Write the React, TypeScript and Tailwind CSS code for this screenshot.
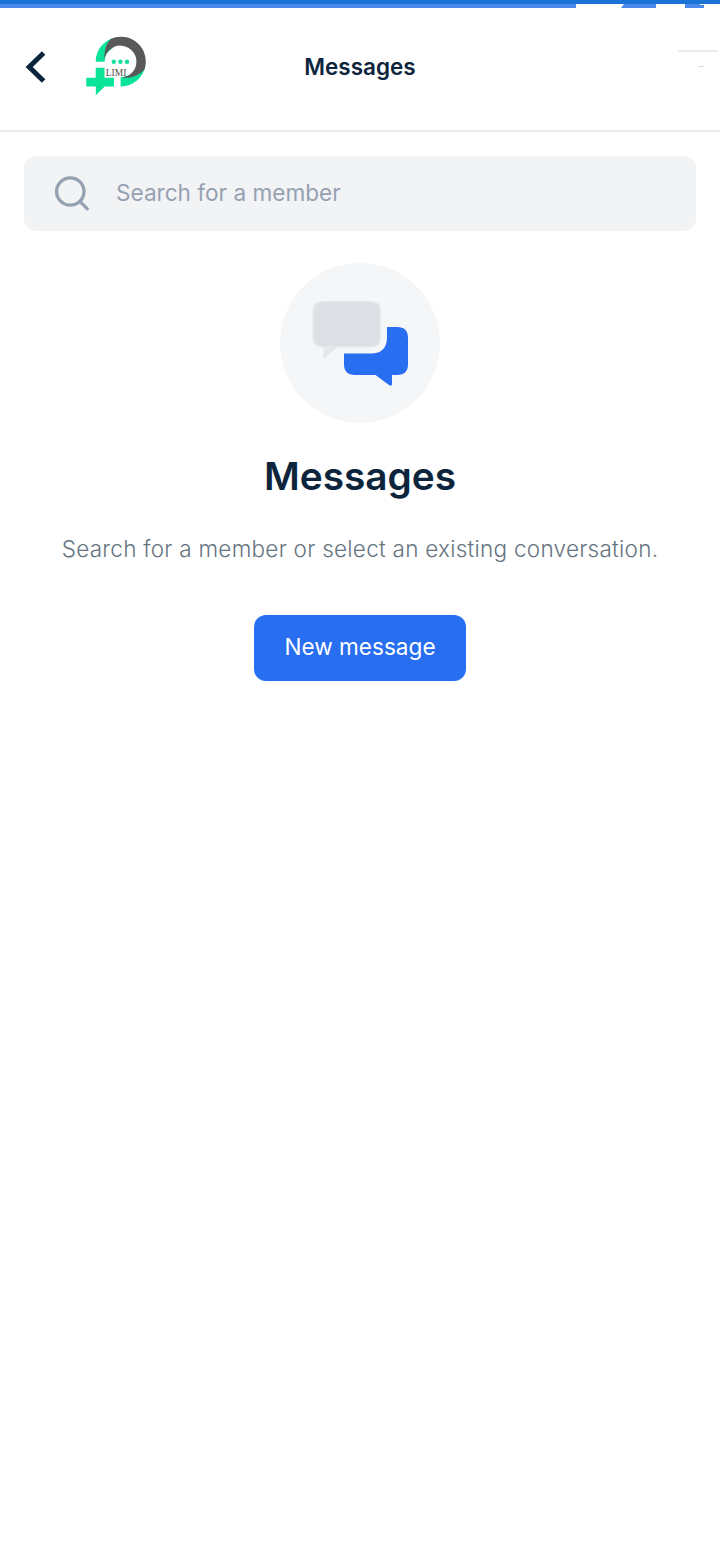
function StatusStrip() {
  return (
    <div className="h-2 bg-white">
      <div className="h-1 bg-[#1a73d5]" />
      <svg className="block h-1 w-full" viewBox="0 0 720 4" fill="#4a8aec">
        <path d="M0 0h576v4H0zM624 0h32v4h-35zM685 0h15v1h4v3h-19z" />
      </svg>
    </div>
  )
}

function Logo() {
  return (
    <svg className="w-20 h-[76px]" viewBox="76 28 80 76">
      <path d="M95.7 61.7A24.8 24.4 0 0 1 117 37.2L113 48A16 16 0 0 0 104.5 61.7z" fill="#0be398" />
      <path d="M120.6 86.4V77.5L134 74L145.3 66A24.8 24.8 0 0 1 120.6 86.4z" fill="#0be398" />
      <path
        d="M104.5 59C104 49 107 43 111 38.8A24.8 24.8 0 0 1 144.4 69.6C139.5 75.5 130.5 79 121 77.6A16 16 0 1 0 104.5 60z"
        fill="#595959"
      />
      <path d="M95.7 67.7h8.8v10h9.5v8.7h-9.3L95.8 95.3v-8.9h-9.5v-8.7h9.4z" fill="#0be398" />
      <circle cx="113.8" cy="61.8" r="2.2" fill="#14e29a" />
      <circle cx="120.4" cy="61.8" r="2.2" fill="#14e29a" />
      <circle cx="127" cy="61.8" r="2.2" fill="#14e29a" />
      <text
        x="105.8"
        y="76"
        fontSize="9.6"
        textLength="20.5"
        lengthAdjust="spacingAndGlyphs"
        fill="#4d4d4d"
        fontFamily="'Liberation Serif', serif"
      >
        LIMI
      </text>
    </svg>
  )
}

function Header() {
  return (
    <header className="relative flex h-[124px] items-center justify-center border-b-2 border-[#ebebeb] pb-1">
      <button className="absolute left-6 top-10 h-10 w-6" aria-label="Back">
        <svg className="h-10 w-6" viewBox="24 48 24 40" fill="none" stroke="#0d253c" strokeWidth="5">
          <path d="M43.6 53L29.2 67L43.6 81" />
        </svg>
      </button>
      <div className="absolute left-[76px] top-5">
        <Logo />
      </div>
      <h1 className="text-[22.5px] font-semibold leading-8 text-[#0d253c]">Messages</h1>
      <div className="absolute right-0.5 top-[42px] flex w-10 flex-col items-end">
        <div className="h-0.5 w-10 bg-[#ebebeb]" />
        <div className="mr-3.5 mt-3.5 h-px w-1.5 bg-[#dedede]" />
      </div>
    </header>
  )
}

function SearchField() {
  return (
    <div className="flex h-[75px] items-center rounded-xl bg-[#f2f3f5] pl-[30px]">
      <svg className="h-9 w-9" viewBox="0 0 36 36" fill="none" stroke="#95a1b1" strokeWidth="3.3">
        <circle cx="16.3" cy="15.5" r="13.7" />
        <path d="M26 25.5L33.3 32.8" strokeLinecap="round" />
      </svg>
      <span className="ml-[26px] pb-0.5 text-[22.6px] leading-8 text-[#95a1b1]">
        Search for a member
      </span>
    </div>
  )
}

function Bubbles() {
  return (
    <svg className="mx-auto mt-8 block h-40 w-40 rounded-full bg-[#f4f6f8]" viewBox="280 263 160 160">
      <path
        d="M323 301H371Q381 301 381 311V337Q381 347.5 371 347.5H337L323.5 359V347.5Q312.5 347 312.5 337V311Q312.5 301 323 301z"
        fill="#e5e7ea"
      />
      <rect x="314.5" y="302.5" width="65" height="43.5" rx="8" fill="#dedfe4" />
      <path
        d="M387 327H397Q408 327 408 338V364Q408 375 397 375H392V384Q392 387 389 385L375.5 375H355Q344 375 344 364V353.5H371Q387 353.5 387 337z"
        fill="#276ef1"
      />
    </svg>
  )
}

export default function App() {
  return (
    <div className="min-h-screen bg-white font-['Inter',sans-serif]">
      <StatusStrip />
      <Header />
      <main className="px-6 pt-6 text-center">
        <SearchField />
        <Bubbles />
        <h2 className="mt-[29px] text-[38.8px] font-semibold leading-12 text-[#0d253c]">Messages</h2>
        <p className="mt-[33px] text-[22.5px] font-light tracking-[0.26px] leading-8 text-[#66747f]">
          Search for a member or select an existing conversation.
        </p>
        <button className="mt-[50px] h-[66px] w-[212px] rounded-xl bg-[#276ef1] pb-0.5 text-[22.6px] text-white">
          New message
        </button>
      </main>
    </div>
  )
}
